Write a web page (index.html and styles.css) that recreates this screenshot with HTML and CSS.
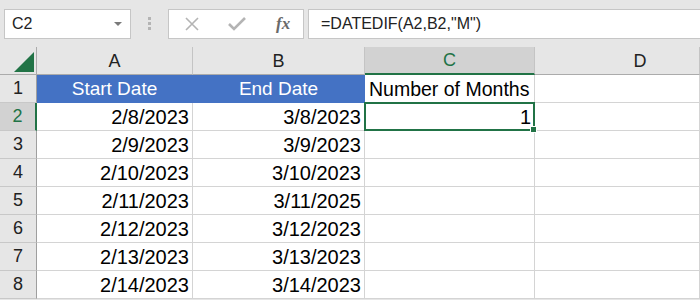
FILE: index.html
```html
<!DOCTYPE html>
<html lang="en">
<head>
    <meta charset="UTF-8">
    <meta name="viewport" content="width=device-width, initial-scale=1.0">
    <title>DATEDIF months</title>
    <link rel="stylesheet" href="styles.css">
</head>
<body>
    <div class="formula-bar">
        <div class="name-box">
            <span>C2</span>
            <span class="drop"></span>
        </div>
        <div class="grip"><i></i><i></i><i></i></div>
        <div class="buttons">
            <svg class="btn" width="16" height="16" viewBox="0 0 16 16">
                <path d="M2 2 L14 14 M14 2 L2 14" stroke="#b4b4b4" stroke-width="1.6" fill="none"/>
            </svg>
            <svg class="btn" width="20" height="16" viewBox="0 0 20 16">
                <path d="M2 8 L7 13 L18 2" stroke="#b4b4b4" stroke-width="2.6" fill="none"/>
            </svg>
            <span class="fx">fx</span>
        </div>
        <div class="formula">=DATEDIF(A2,B2,"M")</div>
    </div>

    <div class="sheet">
        <div class="corner"><span class="tri"></span></div>
        <div class="col-head">A</div>
        <div class="col-head">B</div>
        <div class="col-head active">C</div>
        <div class="col-head last">D</div>

        <div class="row-head">1</div>
        <div class="cell title">Start Date</div>
        <div class="cell title">End Date</div>
        <div class="cell label">Number of Months</div>
        <div class="cell"></div>

        <div class="row-head active">2</div>
        <div class="cell num">2/8/2023</div>
        <div class="cell num">3/8/2023</div>
        <div class="cell num selected">1<span class="handle"></span></div>
        <div class="cell"></div>

        <div class="row-head">3</div>
        <div class="cell num">2/9/2023</div>
        <div class="cell num">3/9/2023</div>
        <div class="cell"></div>
        <div class="cell"></div>

        <div class="row-head">4</div>
        <div class="cell num">2/10/2023</div>
        <div class="cell num">3/10/2023</div>
        <div class="cell"></div>
        <div class="cell"></div>

        <div class="row-head">5</div>
        <div class="cell num">2/11/2023</div>
        <div class="cell num">3/11/2025</div>
        <div class="cell"></div>
        <div class="cell"></div>

        <div class="row-head">6</div>
        <div class="cell num">2/12/2023</div>
        <div class="cell num">3/12/2023</div>
        <div class="cell"></div>
        <div class="cell"></div>

        <div class="row-head">7</div>
        <div class="cell num">2/13/2023</div>
        <div class="cell num">3/13/2023</div>
        <div class="cell"></div>
        <div class="cell"></div>

        <div class="row-head">8</div>
        <div class="cell num">2/14/2023</div>
        <div class="cell num">3/14/2023</div>
        <div class="cell"></div>
        <div class="cell"></div>
    </div>
</body>
</html>
```

FILE: styles.css
```css
body {
    margin: 0;
    padding: 0;
    width: 700px;
    height: 300px;
    overflow: hidden;
    background-color: #e6e6e6;
    font-family: "Liberation Sans", Arial, sans-serif;
    color: #000;
}

.formula-bar {
    display: flex;
    align-items: center;
    height: 47px;
    padding-left: 4px;
    box-sizing: border-box;
}

.name-box {
    display: flex;
    align-items: center;
    justify-content: space-between;
    width: 127px;
    height: 30px;
    box-sizing: border-box;
    background-color: #fff;
    border: 1px solid #c6c6c6;
    padding: 0 8px 0 7px;
    font-size: 16px;
    color: #222;
}

.drop {
    width: 0;
    height: 0;
    border-left: 4px solid transparent;
    border-right: 4px solid transparent;
    border-top: 4px solid #7a7a7a;
}

.grip {
    display: flex;
    flex-direction: column;
    gap: 2px;
    margin: 0 17px 0 17px;
}

.grip i {
    display: block;
    width: 3px;
    height: 3px;
    background-color: #b4b4b4;
}

.buttons {
    display: flex;
    align-items: center;
    width: 136px;
    height: 30px;
    box-sizing: border-box;
    background-color: #fff;
    border: 1px solid #c6c6c6;
    padding-left: 15px;
}

.btn {
    display: block;
    margin-right: 27px;
}

.fx {
    font-family: "Liberation Serif", serif;
    font-style: italic;
    font-weight: bold;
    font-size: 17px;
    color: #6a6a6a;
    margin-left: 2px;
}

.formula {
    flex: 1;
    height: 30px;
    box-sizing: border-box;
    margin-left: 4px;
    background-color: #fff;
    border: 1px solid #c6c6c6;
    border-right: none;
    padding-left: 12px;
    line-height: 28px;
    font-size: 16px;
    color: #222;
}

.sheet {
    display: grid;
    grid-template-columns: 37px 156px 172px 170px 1fr;
    grid-auto-rows: 28px;
    background-color: #fff;
}

.corner,
.col-head,
.row-head {
    background-color: #e6e6e6;
    box-sizing: border-box;
    border-right: 1px solid #ababab;
    border-bottom: 1px solid #ababab;
    display: flex;
    align-items: center;
    justify-content: center;
    font-size: 18px;
    color: #222;
}

.corner {
    position: relative;
}

.tri {
    position: absolute;
    right: 2px;
    bottom: 2px;
    width: 0;
    height: 0;
    border-left: 20px solid transparent;
    border-bottom: 20px solid #217346;
}

.col-head {
    border-right-color: #c4c4c4;
    padding-top: 1px;
}

.col-head.last {
    padding-left: 46px;
}

.col-head.active {
    background-color: #d2d2d2;
    border-bottom: 2px solid #217346;
    color: #217346;
}

.row-head {
    border-right-color: #9f9f9f;
    border-bottom-color: #c8c8c8;
}

.row-head.active {
    background-color: #d2d2d2;
    border-right: 2px solid #217346;
    color: #217346;
}

.cell {
    box-sizing: border-box;
    border-right: 1px solid #d4d4d4;
    border-bottom: 1px solid #d4d4d4;
    font-size: 20px;
    line-height: 28px;
    padding: 0 3px;
    white-space: nowrap;
}

.cell.title {
    background-color: #4472c4;
    border-right-color: #4472c4;
    border-bottom-color: #4472c4;
    color: #fff;
    text-align: center;
    font-size: 19px;
}

.cell.label {
    padding-left: 4px;
    font-size: 19.5px;
}

.cell.num {
    text-align: right;
}

.selected {
    position: relative;
    border: 2px solid #217346;
    margin: -1px 0 0 -1px;
    line-height: 26px;
    padding-right: 2px;
}

.handle {
    position: absolute;
    right: -4px;
    bottom: -4px;
    width: 5px;
    height: 5px;
    background-color: #217346;
    border: 1px solid #fff;
}
```
